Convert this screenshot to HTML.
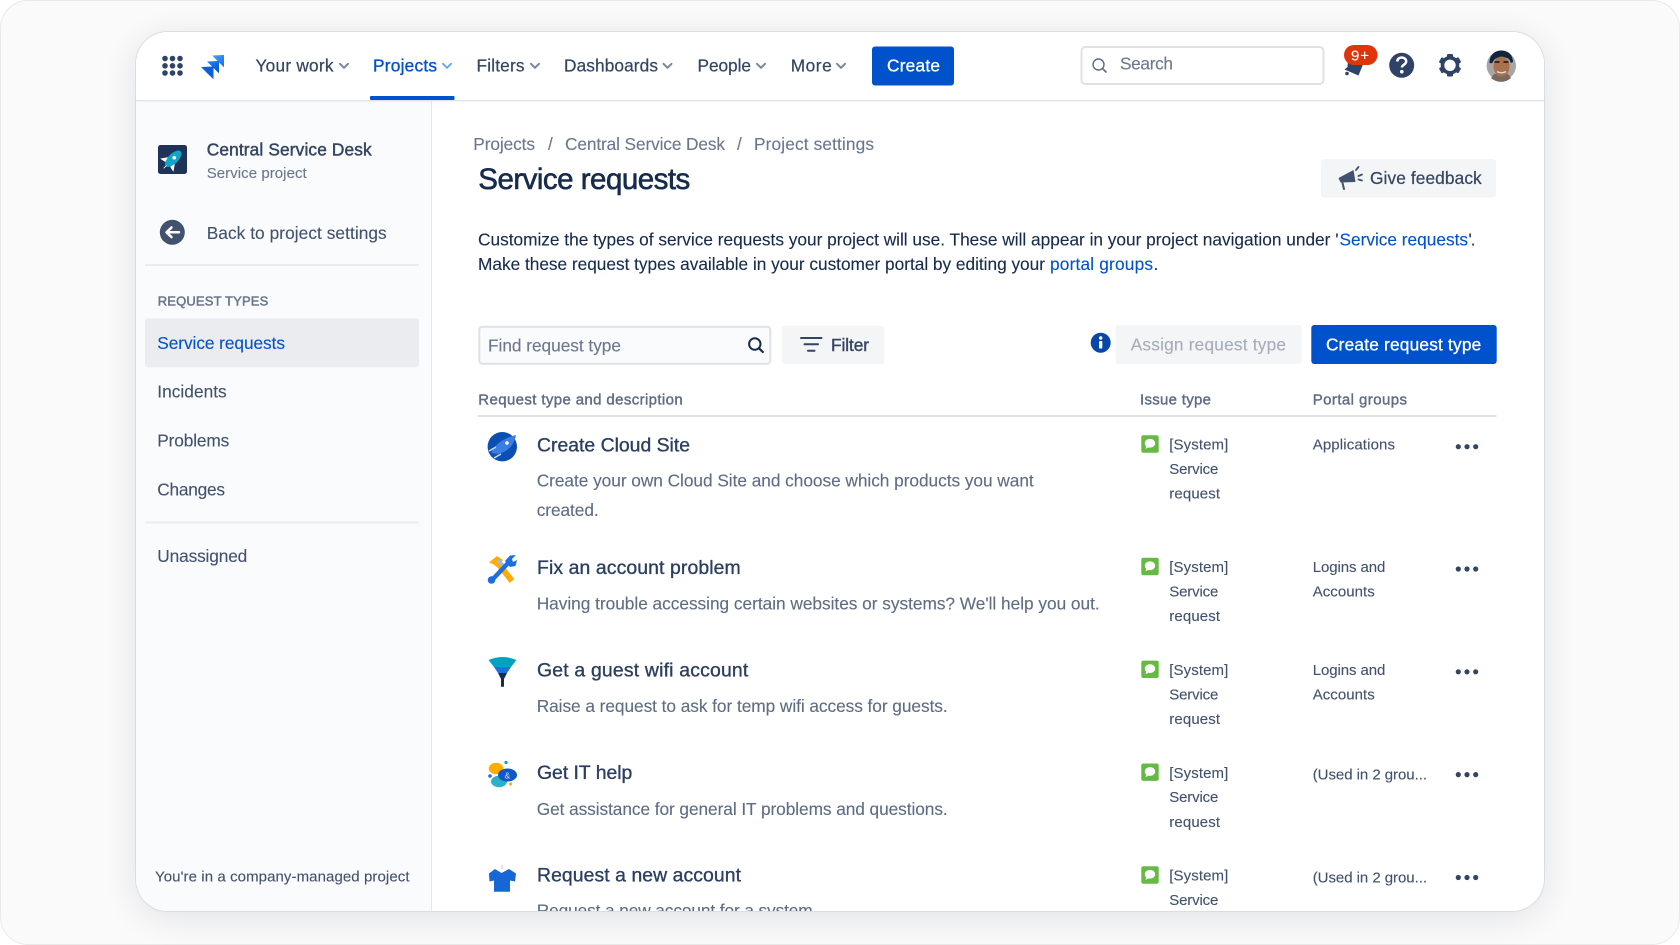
<!DOCTYPE html>
<html lang="en">
<head>
<meta charset="utf-8">
<title>Service requests</title>
<style>
html,body{margin:0;padding:0;width:1680px;height:945px;overflow:hidden;background:#fff}
#frame{position:absolute;left:0;top:0;width:1678px;height:943px;border:1px solid #e9e9e9;border-radius:28px;background:#fafafa}
#card{position:absolute;left:136px;top:32px;width:1408px;height:879px;border-radius:32px;background:#fff;box-shadow:0 0 0 1px #dcdde1,0 6px 34px rgba(9,30,66,.11);overflow:hidden}
#side{position:absolute;left:0;top:69px;width:295px;height:810px;background:#fafbfc;border-right:1px solid #e6e8ec}
#nav{position:absolute;left:0;top:0;width:100%;height:68px;background:#fff;border-bottom:1px solid #e1e3e8;box-shadow:0 1px 1px rgba(9,30,66,.05)}
svg{position:absolute;left:0;top:0}
text{font-family:"Liberation Sans",Arial,sans-serif;font-size:17.3px;fill:#42526e;stroke:#42526e;stroke-width:.12px}
.nav{fill:#344563;stroke:#344563;stroke-width:.22px}
.t{font-size:19.4px;fill:#2c3f60;stroke:#2c3f60;stroke-width:.35px}
.d{fill:#5e6c84;stroke:#5e6c84}
.s{font-size:15px}
.h{font-size:15px;fill:#5e6c84;stroke:#5e6c84;stroke-width:.4px}
.b{fill:#172b4d;stroke:#172b4d}
.l{fill:#0052cc;stroke:#0052cc}
.g{fill:#6b778c;stroke:#6b778c}
</style>
</head>
<body>
<div id="frame"></div>
<div id="card"><div id="side"></div><div id="nav"></div></div>
<svg width="1680" height="945" viewBox="0 0 1680 945" xmlns="http://www.w3.org/2000/svg">
<defs>
<clipPath id="c"><rect x="136" y="32" width="1408" height="879"/></clipPath>
<g id="chev"><path d="M-4 -2.2L0 1.8L4 -2.2" fill="none" stroke-width="2" stroke-linecap="round" stroke-linejoin="round"/></g>
<g id="issue"><rect width="17.4" height="17.4" rx="2" fill="#65ba43"/><path d="M8.7 3.6c-3 0-5.2 1.9-5.2 4.4 0 1.2.5 2.2 1.4 3l-.7 2.6 2.9-1.5c.5.1 1 .2 1.6.2 3 0 5.2-1.9 5.2-4.3S11.700 3.600 8.700 3.600z" fill="#fff"/></g>
<g id="dots" fill="#344563"><circle cx="-8.700" r="2.600"/><circle r="2.600"/><circle cx="8.700" r="2.600"/></g>
<linearGradient id="j1" x1="0" y1="0" x2="1" y2="1"><stop offset="0" stop-color="#4c9aff"/><stop offset="1" stop-color="#1a6fe6"/></linearGradient>
<linearGradient id="j2" x1="0" y1="0" x2="1" y2="1"><stop offset="0" stop-color="#2684ff"/><stop offset="1" stop-color="#0052cc"/></linearGradient>
</defs>

<!-- top nav -->
<g fill="#2f4368">
<circle cx="165" cy="58.500" r="2.800"/><circle cx="172.500" cy="58.500" r="2.800"/><circle cx="180" cy="58.500" r="2.800"/>
<circle cx="165" cy="65.800" r="2.800"/><circle cx="172.500" cy="65.800" r="2.800"/><circle cx="180" cy="65.800" r="2.800"/>
<circle cx="165" cy="73" r="2.800"/><circle cx="172.500" cy="73" r="2.800"/><circle cx="180" cy="73" r="2.800"/>
</g>
<path d="M212.300 55.500L224 55V67.300L219 62.500L217 60.500z" fill="url(#j1)"/>
<path d="M207 61.500L219 61V73.300L214 68.500L212 66.500z" fill="url(#j2)"/>
<path d="M201 67L213.500 66.500V79.300L208.500 74.500L206 72z" fill="#0f5fd6"/>

<text class="nav" x="255.500" y="71.500" textLength="78">Your work</text>
<use href="#chev" x="344" y="66" stroke="#7a869a"/>
<text class="l" style="stroke-width:.35px" x="373" y="71.500" textLength="64">Projects</text>
<use href="#chev" x="447" y="66" stroke="#6ea4f0"/>
<rect x="370" y="96" width="84.500" height="4" rx="1" fill="#0052cc"/>
<text class="nav" x="476.500" y="71.500" textLength="48">Filters</text>
<use href="#chev" x="535" y="66" stroke="#7a869a"/>
<text class="nav" x="564" y="71.500" textLength="94">Dashboards</text>
<use href="#chev" x="667.500" y="66" stroke="#7a869a"/>
<text class="nav" x="697.500" y="71.500" textLength="53.500">People</text>
<use href="#chev" x="761" y="66" stroke="#7a869a"/>
<text class="nav" x="790.700" y="71.500" textLength="41">More</text>
<use href="#chev" x="841" y="66" stroke="#7a869a"/>
<rect x="872" y="46.500" width="82" height="39" rx="3" fill="#0052cc"/>
<text x="887" y="71.500" textLength="53" style="fill:#fff;stroke:#fff;stroke-width:.3px">Create</text>

<rect x="1081.500" y="47" width="242" height="37" rx="4" fill="#fff" stroke="#dfe1e6" stroke-width="2"/>
<circle cx="1098.500" cy="64.500" r="5.500" fill="none" stroke="#5e6c84" stroke-width="1.400"/><path d="M1102.500 68.500L1106 72" stroke="#5e6c84" stroke-width="1.600" stroke-linecap="round"/>
<text class="g" x="1120" y="69.500" textLength="53">Search</text>

<path d="M1348 60L1364 62L1358.500 75.500L1344.500 69.500L1347.500 67z" fill="#2f4368"/><circle cx="1347" cy="73.500" r="1.800" fill="#2f4368"/>
<rect x="1344" y="45" width="33.500" height="20" rx="10" fill="#de350b"/>
<text x="1351" y="60.500" textLength="18" style="font-size:15px;fill:#fff;stroke:#fff">9+</text>
<circle cx="1401.700" cy="65.300" r="12.500" fill="#2f4368"/>
<path d="M1397.300 61.500c0-2.400 2-4 4.400-4s4.500 1.600 4.500 3.900c0 3.400-4.300 3.300-4.300 6.100" fill="none" stroke="#fff" stroke-width="2.500"/><circle cx="1401.800" cy="71.700" r="1.800" fill="#fff"/>
<circle cx="1450" cy="65.300" r="7.500" fill="none" stroke="#2f4368" stroke-width="3.600"/>
<g fill="#2f4368"><rect x="1447" y="54" width="6" height="4.500" rx="1"/><rect x="1447" y="72" width="6" height="4.500" rx="1"/><rect x="1447" y="54" width="6" height="4.500" rx="1" transform="rotate(60 1450 65.300)"/><rect x="1447" y="72" width="6" height="4.500" rx="1" transform="rotate(60 1450 65.300)"/><rect x="1447" y="54" width="6" height="4.500" rx="1" transform="rotate(-60 1450 65.300)"/><rect x="1447" y="72" width="6" height="4.500" rx="1" transform="rotate(-60 1450 65.300)"/></g>
<circle cx="1501.300" cy="65.700" r="14.700" fill="#a8a5a4"/>
<path d="M1491 78a14.700 14.700 0 0 0 20 0l-3-4h-14z" fill="#7a6a5e"/>
<path d="M1489.500 63c0-8 5-12.500 11.800-12.500S1513 55 1513 62l-2.200 1c-1-4-3.500-6-9.500-5.800-5 0-7.500 2-9 6z" fill="#14263d"/>
<ellipse cx="1501.500" cy="66.500" rx="8" ry="10" fill="#a9724f"/>
<path d="M1494.500 62h5M1503.500 62h5" stroke="#2a1c16" stroke-width="1.800"/><path d="M1497 71.500c2.500 1.700 6.500 1.700 9 0" stroke="#e9d6c8" stroke-width="1.500" fill="none"/>

<!-- sidebar -->
<rect x="158" y="145" width="29" height="29" rx="2.500" fill="#1f3358"/>
<g transform="rotate(45 172.500 159.500)"><ellipse cx="172.500" cy="158.500" rx="5" ry="10.500" fill="#11a6c9"/><circle cx="172.500" cy="157" r="1.800" fill="#fff"/><path d="M167.500 162l-3.500 5 4.500-1zM177.500 162l3.500 5-4.500-1zM172.500 168v4" stroke="#fff" stroke-width=".8" fill="#fff"/></g>
<text class="nav" x="206.700" y="155.700" textLength="165" style="stroke-width:.45px">Central Service Desk</text>
<text class="g" x="206.700" y="178" textLength="100" style="font-size:15px">Service project</text>
<circle cx="172.300" cy="232.300" r="12.500" fill="#42526e"/>
<path d="M179 232.300H167M171.500 227.500L166.500 232.300L171.500 237.100" fill="none" stroke="#fff" stroke-width="2.500" stroke-linecap="round" stroke-linejoin="round"/>
<text x="206.700" y="239" textLength="180">Back to project settings</text>
<rect x="145" y="264" width="274" height="2" fill="#ebecf0"/>
<text x="157.700" y="305.700" textLength="110.600" style="font-size:13px;fill:#6b778c;stroke:#6b778c;stroke-width:.5px">REQUEST TYPES</text>
<rect x="145" y="318.300" width="274" height="49" rx="3" fill="#ebecf0"/>
<text class="l" x="157.300" y="349" textLength="127.700">Service requests</text>
<text x="157.300" y="397.700" textLength="69.400">Incidents</text>
<text x="157.300" y="446.700" textLength="72">Problems</text>
<text x="157.300" y="495.700" textLength="67.700">Changes</text>
<rect x="145" y="521.500" width="274" height="2" fill="#ebecf0"/>
<text x="157.300" y="562" textLength="90">Unassigned</text>
<text x="155" y="881.700" textLength="254.500" style="font-size:15px">You're in a company-managed project</text>

<!-- header -->
<text class="g" x="473.300" y="150" textLength="61.700">Projects</text>
<text class="g" x="548" y="150">/</text>
<text class="g" x="565" y="150" textLength="160">Central Service Desk</text>
<text class="g" x="737" y="150">/</text>
<text class="g" x="754" y="150" textLength="120">Project settings</text>
<text x="478.300" y="189" textLength="212" style="font-size:29.500px;fill:#172b4d;stroke:#172b4d;stroke-width:.6px">Service requests</text>
<rect x="1321" y="159" width="175" height="38.700" rx="3" fill="#f4f5f7"/>
<path d="M1338.500 178L1353.500 170L1355.500 182L1340.500 182.500z" fill="#42526e"/><path d="M1342.500 183L1344 189" stroke="#42526e" stroke-width="2" stroke-linecap="round"/>
<path d="M1356 170L1358.500 167M1358.500 176L1362 174.500M1358.500 179.500L1362 180.500" stroke="#42526e" stroke-width="1.800" stroke-linecap="round"/>
<text class="nav" x="1370" y="184" textLength="111.700">Give feedback</text>

<text class="b" x="478" y="245.700" textLength="860.500">Customize the types of service requests your project will use. These will appear in your project navigation under '</text>
<text class="l" x="1339.500" y="245.700" textLength="128.500">Service requests</text>
<text class="b" x="1468.500" y="245.700" textLength="7">'.</text>
<text class="b" x="478" y="270" textLength="567">Make these request types available in your customer portal by editing your</text>
<text class="l" x="1050" y="270" textLength="103">portal groups</text>
<text class="b" x="1153.500" y="270">.</text>

<!-- toolbar -->
<rect x="479.300" y="326.700" width="291" height="37" rx="3" fill="#fafbfc" stroke="#dfe1e6" stroke-width="2"/>
<text class="g" x="488" y="351.700" textLength="133">Find request type</text>
<circle cx="754.800" cy="344" r="5.700" fill="none" stroke="#172b4d" stroke-width="2"/><path d="M759 348.300L762.800 352" stroke="#172b4d" stroke-width="2.200" stroke-linecap="round"/>
<rect x="781.700" y="325.700" width="102.600" height="38.300" rx="3" fill="#f4f5f7"/>
<path d="M801 338H821.500M804.500 344.300H818M808 350.700H814.500" stroke="#344563" stroke-width="2" stroke-linecap="round"/>
<text x="831" y="351" textLength="38" style="fill:#344563;stroke:#344563;stroke-width:.4px">Filter</text>
<circle cx="1100.700" cy="342.700" r="10" fill="#0747a6"/>
<circle cx="1100.700" cy="338" r="1.700" fill="#fff"/><rect x="1099.100" y="341" width="3.200" height="7.500" rx=".8" fill="#fff"/>
<rect x="1115.700" y="325" width="186" height="39" rx="3" fill="#f4f5f7"/>
<text x="1130.700" y="350.700" textLength="155.300" style="fill:#a5adba;stroke:#a5adba">Assign request type</text>
<rect x="1311.300" y="325" width="185.400" height="39" rx="3" fill="#0052cc"/>
<text x="1326" y="350.700" textLength="155.300" style="fill:#fff;stroke:#fff;stroke-width:.3px">Create request type</text>

<text class="h" x="478.300" y="404.500" textLength="204.400">Request type and description</text>
<text class="h" x="1140" y="404.500" textLength="71">Issue type</text>
<text class="h" x="1312.700" y="404.500" textLength="94.300">Portal groups</text>
<rect x="478" y="415" width="1018.500" height="2" fill="#dfe1e6"/>

<g clip-path="url(#c)">
<!-- row 1 -->
<circle cx="502.300" cy="446.700" r="14.700" fill="#0b4fb3"/>
<path d="M491 453C495 445 501 439 516 435C514 446 507 452 498 454z" fill="#3b7de0"/><circle cx="507" cy="443" r="1.800" fill="#fff"/><path d="M489 451L496 447M494 458L501 454" stroke="#cfe0fb" stroke-width="1.300"/>
<text class="t" x="537" y="451.700" textLength="153">Create Cloud Site</text>
<text class="d" x="536.700" y="486.700" textLength="497">Create your own Cloud Site and choose which products you want</text>
<text class="d" x="536.700" y="516" textLength="62">created.</text>
<use href="#issue" x="1141.300" y="435.300"/>
<text class="s" x="1169.300" y="449.700" textLength="59">[System]</text>
<text class="s" x="1169.300" y="474" textLength="49">Service</text>
<text class="s" x="1169.300" y="498.700" textLength="50.700">request</text>
<text class="s" x="1312.700" y="449.700" textLength="82.300">Applications</text>
<use href="#dots" x="1467" y="446.700"/>

<!-- row 2 -->
<path d="M497 562L512 581" stroke="#ffab00" stroke-width="6"/><path d="M489 562.500L497 556L503 560L497 567L493 564z" fill="#ffab00"/><path d="M498 560L504 567" stroke="#b3bac5" stroke-width="4"/>
<path d="M505 561L510 555.500L516 555L512 559L513 562L517 560L515.500 566L510 567z" fill="#1d6fe0"/><circle cx="491.500" cy="580" r="3.800" fill="#1d6fe0"/><path d="M510 561L493 579" stroke="#1d6fe0" stroke-width="4.500"/>
<text class="t" x="537" y="574" textLength="203.700">Fix an account problem</text>
<text class="d" x="536.700" y="609.300" textLength="563">Having trouble accessing certain websites or systems? We'll help you out.</text>
<use href="#issue" x="1141.300" y="557.800"/>
<text class="s" x="1169.300" y="572.200" textLength="59">[System]</text>
<text class="s" x="1169.300" y="596.500" textLength="49">Service</text>
<text class="s" x="1169.300" y="621.200" textLength="50.700">request</text>
<text class="s" x="1312.700" y="572.200" textLength="72.700">Logins and</text>
<text class="s" x="1312.700" y="596.500" textLength="62">Accounts</text>
<use href="#dots" x="1467" y="569"/>

<!-- row 3 -->
<path d="M488.500 660Q502.500 654 516.500 660L511 667H494z" fill="#00a3bf"/>
<path d="M494 667H511L507 673H498z" fill="#1d6fe0"/>
<path d="M498 673H507L504 679V686.700H501V679z" fill="#172b4d"/>
<text class="t" x="537" y="676.500" textLength="211.300">Get a guest wifi account</text>
<text class="d" x="536.700" y="712" textLength="411">Raise a request to ask for temp wifi access for guests.</text>
<use href="#issue" x="1141.300" y="660.600"/>
<text class="s" x="1169.300" y="675" textLength="59">[System]</text>
<text class="s" x="1169.300" y="699.300" textLength="49">Service</text>
<text class="s" x="1169.300" y="724" textLength="50.700">request</text>
<text class="s" x="1312.700" y="675" textLength="72.700">Logins and</text>
<text class="s" x="1312.700" y="699.300" textLength="62">Accounts</text>
<use href="#dots" x="1467" y="671.800"/>

<!-- row 4 -->
<ellipse cx="496" cy="768.500" rx="7.300" ry="5.700" fill="#ffab00"/>
<ellipse cx="499" cy="781.500" rx="8" ry="5.700" fill="#2bb0c9"/>
<ellipse cx="507.500" cy="775" rx="9.500" ry="6.500" fill="#1257c4"/>
<circle cx="506" cy="762.500" r="1.600" fill="#00a3bf"/><circle cx="490" cy="776" r="1.800" fill="#1d6fe0"/><circle cx="510.500" cy="784" r="1.500" fill="#ffab00"/>
<text x="504.500" y="778.500" style="font-size:8.500px;fill:#cfe0fb;stroke:none">&amp;</text>
<text class="t" x="537" y="779" textLength="95.300">Get IT help</text>
<text class="d" x="536.700" y="815" textLength="411">Get assistance for general IT problems and questions.</text>
<use href="#issue" x="1141.300" y="763.500"/>
<text class="s" x="1169.300" y="777.900" textLength="59">[System]</text>
<text class="s" x="1169.300" y="802.200" textLength="49">Service</text>
<text class="s" x="1169.300" y="826.900" textLength="50.700">request</text>
<text class="s" x="1312.700" y="779.700" textLength="114.300">(Used in 2 grou...</text>
<use href="#dots" x="1467" y="774.600"/>

<!-- row 5 -->
<path d="M495 869L501.500 873L509 869L516 873.500L515 881.500L510 880.500L510 891.700H494V880.500L489.500 881.500L489 873.500z" fill="#1766d6"/>
<path d="M502 869V865" stroke="#c1c7d0" stroke-width="1"/>
<text class="t" x="537" y="881.700" textLength="204">Request a new account</text>
<text class="d" x="536.700" y="916.700" textLength="276">Request a new account for a system</text>
<use href="#issue" x="1141.300" y="866.300"/>
<text class="s" x="1169.300" y="880.700" textLength="59">[System]</text>
<text class="s" x="1169.300" y="905" textLength="49">Service</text>
<text class="s" x="1312.700" y="882.700" textLength="114.300">(Used in 2 grou...</text>
<use href="#dots" x="1467" y="877.500"/>
</g>
</svg>
</body>
</html>
